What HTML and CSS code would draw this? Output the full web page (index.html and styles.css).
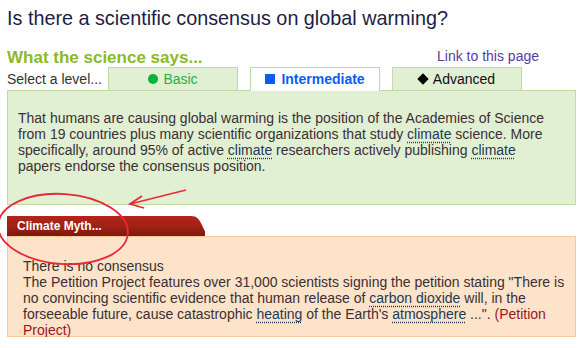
FILE: index.html
```html
<!DOCTYPE html>
<html>
<head>
<meta charset="utf-8">
<link rel="stylesheet" href="styles.css">
</head>
<body>
<div class="page">
  <h1 class="title">Is there a scientific consensus on global warming?</h1>
  <div class="says-row">
    <h2 class="says">What the science says...</h2>
    <a class="link" href="#">Link to this page</a>
  </div>
  <div class="tabs">
    <span class="select">Select a level...</span>
    <div class="tab basic"><span class="dot"></span>Basic</div>
    <div class="tab inter active"><span class="sq"></span>Intermediate</div>
    <div class="tab adv"><span class="dia"></span>Advanced</div>
  </div>
  <div class="panel green">
    <p>That humans are causing global warming is the position of the Academies of Science from 19 countries plus many scientific organizations that study <span class="gl">climate</span> science. More specifically, around 95% of active <span class="gl">climate</span> researchers actively publishing <span class="gl">climate</span> papers endorse the consensus position.</p>
  </div>
  <div class="myth-tab"><span class="gl2">Climate</span> Myth...</div>
  <div class="panel orange">
    <p>There is no consensus<br>The Petition Project features over 31,000 scientists signing the petition stating "There is no convincing scientific evidence that human release of <span class="gl">carbon dioxide</span> will, in the forseeable future, cause catastrophic <span class="gl">heating</span> of the Earth's <span class="gl">atmosphere</span> ...". <a class="src" href="#">(Petition Project)</a></p>
  </div>
  <svg class="annot" width="200" height="80" viewBox="0 0 200 80">
    <ellipse cx="64" cy="41" rx="65" ry="35" fill="none" stroke="#e8283a" stroke-width="1.8" transform="rotate(4 64 41)"/>
    <path d="M187 2 L131 16" fill="none" stroke="#e8283a" stroke-width="1.8"/>
    <path d="M143 8 L131 16 L145 20" fill="none" stroke="#e8283a" stroke-width="1.8"/>
  </svg>
</div>
</body>
</html>
```
FILE: styles.css
```css
* { box-sizing: border-box; }
html, body { margin: 0; padding: 0; background: #fff; }
body { font-family: "Liberation Sans", Arial, sans-serif; }
.page { position: relative; padding: 6px 6px 0 7px; width: 581px; }
.title { margin: 0; font-size: 19.8px; font-weight: normal; line-height: 24px; color: #1d1d45; }
.says-row { display: flex; justify-content: space-between; align-items: flex-end; margin-top: 18px; padding-right: 36px; height: 19px; }
.says { margin: 0; font-size: 17px; font-weight: bold; line-height: 19px; color: #8cba26; }
.link { font-size: 14px; color: #5a3ca0; text-decoration: none; line-height: 18px; position: relative; top: -2px; }
.tabs { display: flex; align-items: flex-end; height: 23px; margin-top: 0; }
.select { font-size: 14px; color: #333; width: 101px; line-height: 22px; }
.tab { width: 130px; height: 23px; margin-right: 12px; background: #e1efd3; border: 1px solid #bcdca6; border-bottom: none; display: flex; align-items: center; justify-content: center; font-size: 14px; line-height: 16px; padding-top: 0; }
.tab.basic { color: #1fb347; }
.tab.inter { color: #0a5cf5; font-weight: bold; }
.tab.active { background: #fff; height: 24px; margin-bottom: -1px; position: relative; z-index: 1; padding-bottom: 1px; }
.tab.adv { color: #111; }
.dot { width: 10px; height: 10px; border-radius: 50%; background: #00b33c; margin-right: 5px; }
.sq { width: 10px; height: 10px; background: #0a5cf5; margin-right: 6px; }
.dia { width: 8px; height: 8px; background: #000; transform: rotate(45deg); margin-right: 6px; }
.panel { border: 1px solid #bcdca6; width: 569px; }
.panel p { margin: 0; font-size: 14px; line-height: 16px; }
.green { background: #e1efd3; height: 115px; padding: 19px 14px 0 10px; color: #3b2f33; }
.gl { color: #223a55; text-decoration: underline dotted #223a55; text-underline-offset: 3px; }
.myth-tab { margin-top: 11px; width: 198px; height: 20px; background: linear-gradient(#b32619, #a11f14 55%, #7c1a10); color: #fff; font-size: 12px; font-weight: bold; line-height: 20px; padding-left: 10px; clip-path: path('M0 0 H184 C190 0 192 3 195 9 C198 16 200 20 206 20 H0 Z'); }
.gl2 { text-decoration: underline dotted #223355; text-underline-offset: 3px; }
.orange { background: #fce3c9; border-color: #f5c99c; height: 101px; padding: 21px 8px 0 15px; color: #3b2f33; }
.src { color: #a0141a; text-decoration: none; }
.annot { position: absolute; left: -1px; top: 188px; overflow: visible; }
```
